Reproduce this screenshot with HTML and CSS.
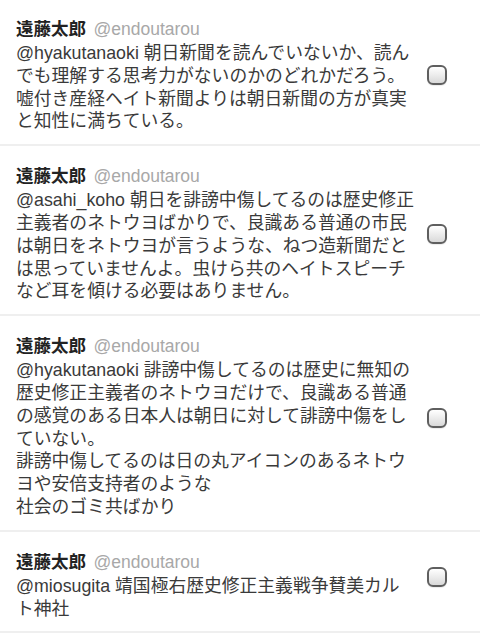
FILE: index.html
```html
<!DOCTYPE html>
<html lang="ja">
<head>
  <meta charset="UTF-8">
  <meta name="viewport" content="width=device-width, initial-scale=1.0">
  <title>ツイート</title>
  <link rel="stylesheet" href="styles.css">
</head>
<body>
  <ul class="tweet-list">
    <li class="tweet">
      <div class="tweet-body">
        <div class="tweet-head">
          <span class="tweet-name">遠藤太郎</span>
          <span class="tweet-handle">@endoutarou</span>
        </div>
        <p class="tweet-text">@hyakutanaoki 朝日新聞を読んでいないか、読ん<br>でも理解する思考力がないのかのどれかだろう。<br>嘘付き産経ヘイト新聞よりは朝日新聞の方が真実<br>と知性に満ちている。</p>
      </div>
      <span class="tweet-check"></span>
    </li>
    <li class="tweet">
      <div class="tweet-body">
        <div class="tweet-head">
          <span class="tweet-name">遠藤太郎</span>
          <span class="tweet-handle">@endoutarou</span>
        </div>
        <p class="tweet-text">@asahi_koho 朝日を誹謗中傷してるのは歴史修正<br>主義者のネトウヨばかりで、良識ある普通の市民<br>は朝日をネトウヨが言うような、ねつ造新聞だと<br>は思っていませんよ。虫けら共のヘイトスピーチ<br>など耳を傾ける必要はありません。</p>
      </div>
      <span class="tweet-check"></span>
    </li>
    <li class="tweet">
      <div class="tweet-body">
        <div class="tweet-head">
          <span class="tweet-name">遠藤太郎</span>
          <span class="tweet-handle">@endoutarou</span>
        </div>
        <p class="tweet-text">@hyakutanaoki 誹謗中傷してるのは歴史に無知の<br>歴史修正主義者のネトウヨだけで、良識ある普通<br>の感覚のある日本人は朝日に対して誹謗中傷をし<br>ていない。<br>誹謗中傷してるのは日の丸アイコンのあるネトウ<br>ヨや安倍支持者のような<br>社会のゴミ共ばかり</p>
      </div>
      <span class="tweet-check tweet-check--high"></span>
    </li>
    <li class="tweet">
      <div class="tweet-body">
        <div class="tweet-head">
          <span class="tweet-name">遠藤太郎</span>
          <span class="tweet-handle">@endoutarou</span>
        </div>
        <p class="tweet-text">@miosugita 靖国極右歴史修正主義戦争賛美カル<br>ト神社</p>
      </div>
      <span class="tweet-check tweet-check--high"></span>
    </li>
  </ul>
</body>
</html>
```

FILE: styles.css
```css
/* Reset */
* {
  margin: 0;
  padding: 0;
  box-sizing: border-box;
}

body {
  font-family: 'Liberation Sans', 'Noto Sans CJK JP', sans-serif;
  background-color: #fff;
  color: #3a3a3a;
}

/* Tweet list */
.tweet-list {
  list-style: none;
}

.tweet {
  display: flex;
  align-items: center;
  padding: 18px 33px 11px 16px;
  border-bottom: 2px solid #efefef;
}

.tweet:first-child {
  padding-top: 17px;
}

.tweet-body {
  flex: 1;
  min-width: 0;
}

.tweet-head {
  height: 25px;
  line-height: 25px;
  white-space: nowrap;
}

.tweet-name {
  font-size: 17.5px;
  font-weight: bold;
  color: #222;
}

.tweet-handle {
  margin-left: 3px;
  font-size: 17.5px;
  color: #a8a8a8;
}

.tweet-text {
  font-size: 17.8px;
  line-height: 22.8px;
  white-space: nowrap;
}

/* Checkbox */
.tweet-check {
  flex-shrink: 0;
  width: 20px;
  height: 20px;
  margin-left: 10px;
  border: 2px solid #5f5f5f;
  border-radius: 6px;
  background: linear-gradient(#ffffff, #d9d9d9);
  box-shadow: 0 1px 1px rgba(0, 0, 0, 0.08);
}

.tweet-check--high {
  margin-bottom: 16px;
}
```
